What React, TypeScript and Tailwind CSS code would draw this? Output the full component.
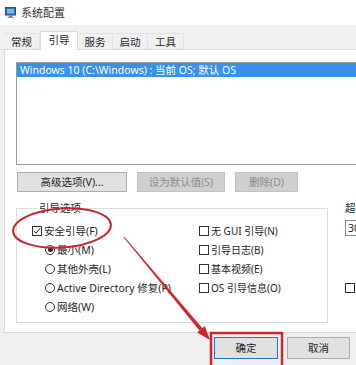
import React from "react";

const FONT = "font-['Noto_Sans','Noto_Sans_CJK_SC',sans-serif]";

function CheckBox({ checked }: { checked?: boolean }) {
  return (
    <span className="w-[10px] h-[10px] border border-[#333] bg-white flex items-center justify-center shrink-0">
      {checked && (
        <svg width="8" height="8" viewBox="0 0 8 8">
          <path d="M1 4.2 L3 6.2 L7 1.4" stroke="#222" strokeWidth="1" fill="none" />
        </svg>
      )}
    </span>
  );
}

function Radio({ selected }: { selected?: boolean }) {
  return (
    <span className="w-[10px] h-[10px] rounded-full border border-[#333] bg-white flex items-center justify-center shrink-0">
      {selected && <span className="w-[5px] h-[5px] rounded-full bg-[#1e1e1e]" />}
    </span>
  );
}

function Row({ children }: { children: React.ReactNode }) {
  return <div className="h-[19px] flex items-center gap-[2px] whitespace-nowrap">{children}</div>;
}

function AppIcon() {
  return (
    <svg width="11" height="11" viewBox="0 0 11 11">
      <rect x="0.5" y="0.5" width="10" height="7.5" fill="#2f6fc4" stroke="#2a4f80" />
      <rect x="2" y="2" width="7" height="4.5" fill="#7fb4ea" />
      <rect x="4" y="8.5" width="3" height="1.5" fill="#6a7a90" />
      <rect x="2.5" y="9.8" width="6" height="1" fill="#6a7a90" />
    </svg>
  );
}

export default function App() {
  const tabs = [
    { t: "常规", w: "w-[36px]" },
    { t: "引导", w: "w-[38px]", sel: true },
    { t: "服务", w: "w-[35px]" },
    { t: "启动", w: "w-[35px]" },
    { t: "工具", w: "w-[36px]" },
  ];
  return (
    <div className={`relative w-[356px] h-[365px] overflow-hidden bg-[#f0f0f0] flex flex-col text-[10.5px] leading-[14px] text-[#1e1e1e] ${FONT}`}>
      {/* title bar */}
      <div className="h-[25px] bg-white flex items-center pl-[5px] gap-[5px] shrink-0">
        <AppIcon />
        <span className="text-[11px] text-[#333]">系统配置</span>
      </div>

      {/* tabs */}
      <div className="h-[25px] flex items-end pl-[4px] border-b border-[#d9d9d9] shrink-0">
        {tabs.map((tab) =>
          tab.sel ? (
            <div
              key={tab.t}
              className={`${tab.w} h-[19px] -mb-px bg-white border border-b-0 border-[#d9d9d9] flex items-start justify-center pt-[1px]`}
            >
              {tab.t}
            </div>
          ) : (
            <div
              key={tab.t}
              className={`${tab.w} h-[16px] border-t border-r border-[#e2e2e2] flex items-center justify-center`}
            >
              {tab.t}
            </div>
          )
        )}
      </div>

      {/* panel */}
      <div className="ml-[4px] h-[283px] shrink-0 bg-white border-l border-b border-[#dadada] flex flex-col overflow-hidden">
        {/* list box */}
        <div className="ml-[11px] mt-[12px] w-[400px] h-[103px] border border-[#9a9a9a] shrink-0">
          <div className="h-[14px] bg-[#3891ec] text-white flex items-center pl-[3px] whitespace-nowrap">
            Windows 10 (C:\Windows) : 当前 OS; 默认 OS
          </div>
        </div>

        {/* buttons */}
        <div className="ml-[12px] mt-[7px] flex gap-[10px] h-[20px] shrink-0">
          <div className="w-[110px] bg-[#e1e1e1] border border-[#adadad] flex items-center justify-center">高级选项(V)...</div>
          <div className="w-[88px] bg-[#cfcfcf] border border-[#c2c2c2] text-[#8c8c8c] flex items-center justify-center">设为默认值(S)</div>
          <div className="w-[63px] bg-[#cfcfcf] border border-[#c2c2c2] text-[#8c8c8c] flex items-center justify-center">删除(D)</div>
        </div>

        {/* options */}
        <div className="mt-[9px] flex shrink-0">
          <fieldset className="ml-[11px] w-[312px] shrink-0 border border-[#dcdcdc] pl-[15px] pt-[6px] pb-[6px] flex">
            <legend className="ml-[5px] px-[2px] leading-[14px]">引导选项</legend>
            <div className="w-[167px] flex flex-col shrink-0">
              <Row>
                <CheckBox checked />
                <span>安全引导(F)</span>
              </Row>
              <div className="ml-[13px] flex flex-col">
                <Row>
                  <Radio selected />
                  <span>最小(M)</span>
                </Row>
                <Row>
                  <Radio />
                  <span>其他外壳(L)</span>
                </Row>
                <Row>
                  <Radio />
                  <span>Active Directory 修复(P)</span>
                </Row>
                <Row>
                  <Radio />
                  <span>网络(W)</span>
                </Row>
              </div>
            </div>
            <div className="flex flex-col text-[10px]">
              <Row>
                <CheckBox />
                <span>无 GUI 引导(N)</span>
              </Row>
              <Row>
                <CheckBox />
                <span>引导日志(B)</span>
              </Row>
              <Row>
                <CheckBox />
                <span>基本视频(E)</span>
              </Row>
              <Row>
                <CheckBox />
                <span>OS 引导信息(O)</span>
              </Row>
            </div>
          </fieldset>

          <div className="ml-[17px] flex flex-col shrink-0">
            <div className="h-[14px] whitespace-nowrap">超时:</div>
            <div className="mt-[5px] w-[60px] h-[16px] border border-[#8a8a8a] bg-white flex items-center pl-[2px]">30</div>
            <div className="mt-[47px] flex items-center">
              <CheckBox />
            </div>
          </div>
        </div>
      </div>

      {/* bottom buttons */}
      <div className="flex justify-end pr-[6px] mt-[4px] gap-[9px] shrink-0">
        <div className="w-[64px] h-[22px] bg-[#e1e1e1] border border-[#1f76d2] flex items-center justify-center">确定</div>
        <div className="w-[63px] h-[22px] bg-[#e1e1e1] border border-[#adadad] flex items-center justify-center">取消</div>
      </div>

      {/* annotations */}
      <svg className="absolute inset-0 pointer-events-none" width="356" height="365" viewBox="0 0 356 365">
        <ellipse cx="62" cy="228" rx="49" ry="19.5" transform="rotate(-4 62 228)" fill="none" stroke="#c8262c" strokeWidth="2" />
        <polygon points="123.2,236.8 124.8,237.2 202.4,328.3 199.6,330.7" fill="#d0262c" />
        <polygon points="210,340 197.2,332.5 204.8,326.1" fill="#d0262c" />
        <rect x="211" y="333" width="71" height="40" fill="none" stroke="#d3262c" strokeWidth="2.5" />
      </svg>
    </div>
  );
}
